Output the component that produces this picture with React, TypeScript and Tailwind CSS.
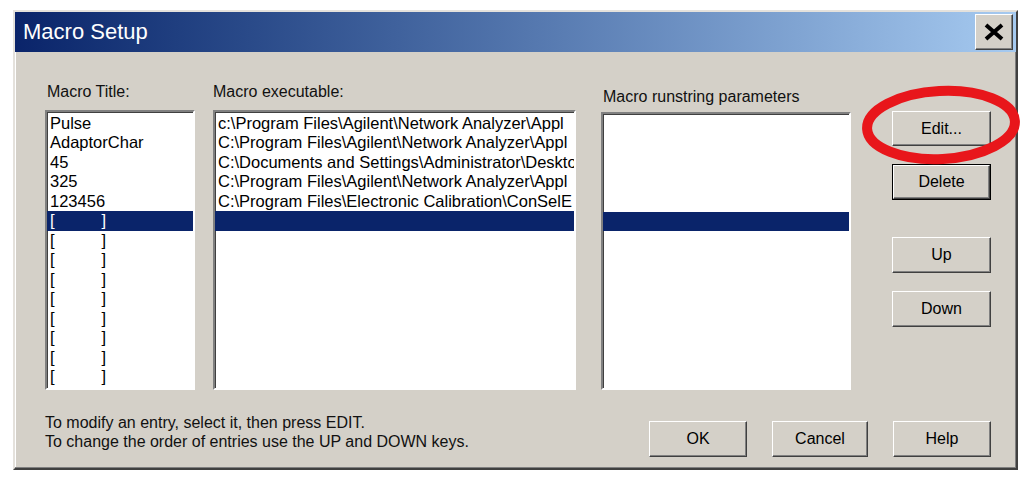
import React from 'react';

const titles = ['Pulse', 'AdaptorChar', '45', '325', '123456'];
// only the part that fits in the list box is shown
const exes = [
  'c:\\Program Files\\Agilent\\Network Analyzer\\Appl',
  'C:\\Program Files\\Agilent\\Network Analyzer\\Appl',
  'C:\\Documents and Settings\\Administrator\\Deskto',
  'C:\\Program Files\\Agilent\\Network Analyzer\\Appl',
  'C:\\Program Files\\Electronic Calibration\\ConSelE',
];

const sunken =
  'border-2 border-t-[#808080] border-l-[#808080] border-b-white border-r-white shadow-[inset_1px_1px_0_#404040] bg-white overflow-hidden';
const raised =
  'flex items-center justify-center bg-[#d4d0c8] border border-t-white border-l-white border-r-[#404040] border-b-[#404040] shadow-[inset_-1px_-1px_0_#808080] text-[16px] text-black';

function Brackets({ light }: { light?: boolean }) {
  return (
    <span className={`inline-flex w-[56px] justify-between ${light ? 'text-white' : 'text-black'}`}>
      <span>[</span>
      <span>]</span>
    </span>
  );
}

function Button(props: { label: string; className?: string }) {
  return <div className={`${raised} ${props.className || ''}`}>{props.label}</div>;
}

export default function App() {
  return (
    <div className="relative w-[1030px] h-[484px] bg-white font-['Liberation_Sans',Arial,sans-serif] overflow-hidden">
      <div className="ml-[13px] pt-[10px]">
        <div className="w-[1005px] h-[460px] bg-[#d4d0c8] border-2 border-t-[#e4e1dc] border-l-[#e4e1dc] border-r-[#404040] border-b-[#404040] shadow-[inset_-1px_-1px_0_#808080,inset_1px_1px_0_#ffffff] flex flex-col">
          {/* title bar */}
          <div className="h-[40px] flex items-center justify-between bg-gradient-to-r from-[#0a246a] to-[#a6caf0] pl-[8px] pr-[3px]">
            <span className="text-white text-[22px] leading-none">Macro Setup</span>
            <div className="w-[38px] h-[36px] bg-[#d4d0c8] border border-t-white border-l-white border-r-[#404040] border-b-[#404040] shadow-[inset_-1px_-1px_0_#808080] flex items-center justify-center">
              <svg width="22" height="18" viewBox="0 0 22 18">
                <path d="M3 2 L19 16 M19 2 L3 16" stroke="#000" strokeWidth="4" />
              </svg>
            </div>
          </div>

          {/* columns */}
          <div className="flex items-start pl-[30px] pt-[31px]">
            <div className="w-[150px]">
              <div className="text-[16px] leading-[18px] mb-[9px] pl-[2px] text-[#111]">Macro Title:</div>
              <div className={`${sunken} h-[280px] text-[16.5px] leading-[19.5px] pt-[1.5px]`}>
                {titles.map((t) => (
                  <div key={t} className="pl-[3px] whitespace-nowrap">{t}</div>
                ))}
                <div className="pl-[3px] bg-[#0a246a]">
                  <Brackets light />
                </div>
                {Array.from({ length: 8 }).map((_, i) => (
                  <div key={i} className="pl-[3px]">
                    <Brackets />
                  </div>
                ))}
              </div>
            </div>

            <div className="w-[363px] ml-[18px]">
              <div className="text-[16px] leading-[18px] mb-[9px] text-[#111]">Macro executable:</div>
              <div className={`${sunken} h-[280px] text-[16.5px] leading-[19.5px] pt-[1.5px]`}>
                {exes.map((t, i) => (
                  <div key={i} className="pl-[3px] whitespace-nowrap">{t}</div>
                ))}
                <div className="h-[19.5px] bg-[#0a246a]" />
              </div>
            </div>

            <div className="w-[250px] ml-[25px] mt-[5px]">
              <div className="text-[16px] leading-[18px] mb-[6px] pl-[2px] text-[#111]">Macro runstring parameters</div>
              <div className={`${sunken} h-[278px] pt-[97.5px]`}>
                <div className="h-[19.5px] bg-[#0a246a]" />
              </div>
            </div>

            <div className="w-[99px] ml-[41px] mt-[28px] flex flex-col">
              <Button label="Edit..." className="h-[35px]" />
              <div className="mt-[18px] border border-black">
                <Button label="Delete" className="h-[34px]" />
              </div>
              <Button label="Up" className="h-[36px] mt-[37px]" />
              <Button label="Down" className="h-[36px] mt-[18px]" />
            </div>
          </div>

          {/* bottom */}
          <div className="flex items-start pl-[30px] pr-[25px] mt-[23px]">
            <div className="text-[16px] leading-[19px] text-[#111]">
              <div>To modify an entry, select it, then press EDIT.</div>
              <div>To change the order of entries use the UP and DOWN keys.</div>
            </div>
            <div className="ml-auto mt-[8px] flex gap-[25px]">
              <Button label="OK" className="w-[98px] h-[36px]" />
              <Button label="Cancel" className="w-[96px] h-[36px]" />
              <Button label="Help" className="w-[98px] h-[36px]" />
            </div>
          </div>
        </div>
      </div>

      {/* red highlight around Edit */}
      <svg className="absolute left-[858px] top-[82px]" width="166" height="86" viewBox="0 0 166 86">
        <ellipse cx="83" cy="43" rx="74" ry="34" fill="none" stroke="#e8161b" strokeWidth="10" transform="rotate(-3 83 43)" />
      </svg>
    </div>
  );
}
